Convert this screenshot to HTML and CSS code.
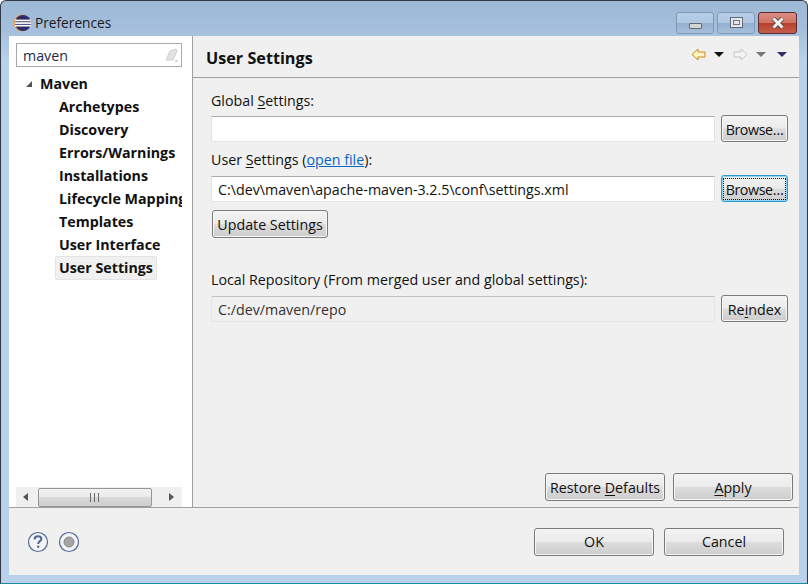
FILE: index.html
```html
<!DOCTYPE html>
<html lang="en">
<head>
    <meta charset="UTF-8">
    <meta name="viewport" content="width=device-width, initial-scale=1.0">
    <title>Preferences</title>
    <link rel="stylesheet" href="styles.css">
</head>
<body>

<div class="window">
    <div class="titlebar">
        <svg class="app-icon" width="18" height="18" viewBox="0 0 18 18">
            <circle cx="9" cy="9" r="8.5" fill="#e8a050"/>
            <circle cx="10" cy="9" r="8" fill="#2c2a6a"/>
            <rect x="2" y="5.6" width="16" height="1.7" fill="#fff"/>
            <rect x="2" y="8.2" width="16" height="1.7" fill="#fff"/>
            <rect x="2" y="10.8" width="16" height="1.7" fill="#fff"/>
        </svg>
        <span class="title">Preferences</span>
        <div class="win-buttons">
            <div class="win-btn">
                <span class="min-glyph"></span>
            </div>
            <div class="win-btn">
                <span class="max-glyph"></span>
            </div>
            <div class="win-btn close">
                <svg width="14" height="12" viewBox="0 0 14 12">
                    <path d="M2.5 1.5 L11.5 10.5 M11.5 1.5 L2.5 10.5" stroke="#4a3a3a" stroke-width="4.4"/>
                    <path d="M2.5 1.5 L11.5 10.5 M11.5 1.5 L2.5 10.5" stroke="#f4f4f4" stroke-width="3"/>
                </svg>
            </div>
        </div>
    </div>

    <div class="content">
        <div class="main">
            <div class="sidebar">
                <div class="filter">
                    <span>maven</span>
                    <svg width="14" height="14" viewBox="0 0 14 14">
                        <path d="M1 12 L5 3 L11 1 L12 3 L8 12 Z" fill="#e2e2e2" stroke="#cfcfcf"/>
                        <path d="M10 13 H13" stroke="#aaa"/>
                    </svg>
                </div>
                <div class="tree">
                    <div class="tree-root">
                        <span class="twisty"></span>
                        <span>Maven</span>
                    </div>
                    <div class="tree-item">Archetypes</div>
                    <div class="tree-item">Discovery</div>
                    <div class="tree-item">Errors/Warnings</div>
                    <div class="tree-item">Installations</div>
                    <div class="tree-item">Lifecycle Mappings</div>
                    <div class="tree-item">Templates</div>
                    <div class="tree-item">User Interface</div>
                    <div class="tree-item"><span class="selected">User Settings</span></div>
                </div>
                <div class="hscroll">
                    <span class="arrow-left"></span>
                    <div class="thumb">
                        <span class="grip"></span>
                    </div>
                    <span class="arrow-right"></span>
                </div>
            </div>

            <div class="page">
                <div class="page-header">
                    <h2>User Settings</h2>
                    <div class="nav-icons">
                        <svg width="15" height="13" viewBox="0 0 15 13">
                            <path d="M1 6.5 L7 1 V4 H14 V9 H7 V12 Z" fill="#fff3c4" stroke="#c98a1a"/>
                        </svg>
                        <span class="drop dark"></span>
                        <svg class="nav-forward" width="15" height="13" viewBox="0 0 15 13">
                            <path d="M14 6.5 L8 1 V4 H1 V9 H8 V12 Z" fill="#f6f6f6" stroke="#c4c4c4"/>
                        </svg>
                        <span class="drop gray"></span>
                        <span class="drop view-menu"></span>
                    </div>
                </div>

                <div class="form">
                    <div class="label"><span>Global <u>S</u>ettings:</span></div>
                    <div class="field-row">
                        <div class="field"></div>
                        <button class="btn browse">Browse…</button>
                    </div>

                    <div class="label label-user"><span>User <u>S</u>ettings (<a href="#">open file</a>):</span></div>
                    <div class="field-row">
                        <div class="field">C:\dev\maven\apache-maven-3.2.5\conf\settings.xml</div>
                        <button class="btn browse focused"><span class="focus-ring">Browse…</span></button>
                    </div>

                    <button class="btn update">Update Settings</button>

                    <div class="label label-repo"><span>Local Repository (From merged user and global settings):</span></div>
                    <div class="field-row">
                        <div class="field readonly">C:/dev/maven/repo</div>
                        <button class="btn browse reindex">Re<u>i</u>ndex</button>
                    </div>
                </div>

                <div class="page-actions">
                    <button class="btn action">Restore <u>D</u>efaults</button>
                    <button class="btn action"><u>A</u>pply</button>
                </div>
            </div>
        </div>

        <div class="footer">
            <svg class="help" width="22" height="22" viewBox="0 0 22 22">
                <circle cx="11" cy="11" r="9.5" fill="#f4f4f6" stroke="#4f6a94" stroke-width="1.2"/>
                <path d="M7.6 8.4 C7.6 6 9.4 5.2 11 5.2 C13 5.2 14.4 6.3 14.4 8 C14.4 10.2 11.2 10.2 11.2 13" fill="none" stroke="#4f6a94" stroke-width="2"/>
                <rect x="10.1" y="14.6" width="2.2" height="2.2" fill="#4f6a94"/>
            </svg>
            <svg class="record" width="22" height="22" viewBox="0 0 22 22">
                <circle cx="11" cy="11" r="9.5" fill="#f4f4f6" stroke="#4f6a94" stroke-width="1.2"/>
                <circle cx="11" cy="11" r="5" fill="#a4a4a4" stroke="#8a8a8a"/>
            </svg>
            <div class="footer-actions">
                <button class="btn action">OK</button>
                <button class="btn action">Cancel</button>
            </div>
        </div>
    </div>
</div>

</body>
</html>
```

FILE: styles.css
```css
* {
    box-sizing: border-box;
}
html, body {
    margin: 0;
    padding: 0;
}
body {
    width: 808px;
    height: 584px;
    overflow: hidden;
    font-family: "Open Sans", "Noto Sans", Arial, sans-serif;
    font-size: 14.25px;
    color: #111;
    background-color: #fff;
}
u {
    text-underline-offset: 2px;
}
.window {
    width: 808px;
    height: 584px;
    display: flex;
    flex-direction: column;
    padding: 0 8px 8px 8px;
    border: 1px solid #2f3a45;
    border-bottom-color: #1b8c9e;
    border-radius: 6px 6px 0 0;
    background: linear-gradient(to bottom, #9db9d6 0, #a5bfdc 30px, #b9d1ea 60px);
}

/* title bar */
.titlebar {
    height: 35px;
    flex-shrink: 0;
    display: flex;
    align-items: center;
    margin-left: 4px;
    padding-top: 8px;
}
.app-icon {
    margin-right: 4px;
}
.title {
    font-size: 13.7px;
    color: #1a1a1a;
}
.win-buttons {
    margin-left: auto;
    margin-right: 2px;
    display: flex;
    gap: 3px;
}
.win-btn {
    width: 38px;
    height: 22px;
    display: flex;
    align-items: center;
    justify-content: center;
    border: 1px solid #7f98b6;
    border-radius: 3px;
    background: linear-gradient(to bottom, #b6cde6 0, #b0c8e2 50%, #94b0cf 52%, #a6c0dc 100%);
}
.win-btn.close {
    width: 39px;
    border-color: #5a2a35;
    background: linear-gradient(to bottom, #d98d80 0, #cf7466 48%, #b8402c 52%, #c4604e 100%);
}
.min-glyph {
    width: 13px;
    height: 6px;
    margin-top: 6px;
    background-color: #d4d4d4;
    border: 1px solid #5e6a78;
    border-radius: 1px;
}
.max-glyph {
    width: 13px;
    height: 11px;
    background-color: #e8e8e8;
    border: 1px solid #5e6a78;
    box-shadow: inset 0 0 0 2px #e8e8e8, inset 0 0 0 3px #6a7686;
}

.content {
    flex: 1;
    display: flex;
    flex-direction: column;
    min-height: 0;
    background-color: #f0f0f0;
}
.main {
    flex: 1;
    display: flex;
    min-height: 0;
}

/* left tree */
.sidebar {
    width: 184px;
    flex-shrink: 0;
    display: flex;
    flex-direction: column;
    padding: 7px 10px 0 7px;
    background-color: #fff;
    border-right: 1px solid #a0a0a0;
}
.filter {
    height: 24px;
    flex-shrink: 0;
    display: flex;
    align-items: center;
    justify-content: space-between;
    padding: 0 2px 0 6px;
    border: 1px solid #a9a9a9;
    color: #1c2c4a;
}
.tree {
    flex: 1;
    margin-top: 5px;
    overflow: hidden;
    white-space: nowrap;
    font-weight: 700;
}
.tree-root {
    height: 23px;
    display: flex;
    align-items: center;
    padding-left: 10px;
}
.twisty {
    width: 0;
    height: 0;
    margin-right: 8px;
    border-left: 6px solid transparent;
    border-bottom: 6px solid #555;
}
.tree-item {
    height: 23px;
    line-height: 23px;
    padding-left: 43px;
}
.selected {
    display: inline-block;
    padding: 0 3px;
    margin-left: -4px;
    line-height: 22px;
    background-color: #f0f0f0;
    border: 1px solid #e4e4e4;
    border-radius: 2px;
}
.hscroll {
    height: 20px;
    flex-shrink: 0;
    display: flex;
    align-items: center;
    background-color: #f0f0f0;
}
.arrow-left, .arrow-right {
    width: 0;
    height: 0;
    border-top: 4px solid transparent;
    border-bottom: 4px solid transparent;
}
.arrow-left {
    margin-left: 7px;
    border-right: 5px solid #555;
}
.arrow-right {
    margin-left: auto;
    margin-right: 8px;
    border-left: 5px solid #555;
}
.thumb {
    width: 114px;
    height: 19px;
    margin-left: 10px;
    display: flex;
    align-items: center;
    justify-content: center;
    border: 1px solid #959595;
    border-radius: 2px;
    background: linear-gradient(to bottom, #f2f2f2 0, #ebebeb 45%, #d8d8d8 50%, #cfcfcf 100%);
}
.grip {
    width: 10px;
    height: 9px;
    background: repeating-linear-gradient(to right, #6a6a6a 0, #6a6a6a 1px, transparent 1px, transparent 4px);
}

/* right page */
.page {
    flex: 1;
    display: flex;
    flex-direction: column;
    min-width: 0;
}
.page-header {
    height: 42px;
    flex-shrink: 0;
    display: flex;
    justify-content: space-between;
    padding: 10px 12px 0 13px;
    border-bottom: 1px solid #a0a0a0;
}
.page-header h2 {
    margin: 0;
    font-size: 16.2px;
    line-height: 24px;
    font-weight: 700;
}
.nav-icons {
    display: flex;
    align-items: center;
    height: 16px;
}
.drop {
    width: 0;
    height: 0;
    margin-left: 8px;
    border-left: 5px solid transparent;
    border-right: 5px solid transparent;
    border-top: 5px solid #111;
}
.drop.gray {
    border-top-color: #777;
}
.drop.view-menu {
    margin-left: 11px;
    border-top-color: #3a2a6a;
}
.nav-forward {
    margin-left: 9px;
}
.form {
    flex: 1;
    padding: 13px 11px 0 18px;
}
.label {
    height: 24px;
}
.label-user {
    margin-top: 8px;
    height: 25px;
}
.label-repo {
    margin-top: 32px;
    height: 25px;
}
a {
    color: #0a64c4;
}
.field-row {
    display: flex;
    gap: 6px;
    height: 27px;
}
.field {
    flex: 1;
    height: 26px;
    margin-top: 1px;
    line-height: 25px;
    padding: 0 6px;
    background-color: #fff;
    border: 1px solid #e4e4e4;
    border-top-color: #ababab;
    color: #111;
    border-radius: 1px;
}
.field.readonly {
    background-color: #f0f0f0;
    color: #333;
    border-color: #e4e4e4;
    border-top-color: #c0c0c0;
}
.btn {
    font-family: inherit;
    font-size: 14.25px;
    color: #111;
    padding: 0;
    border: 1px solid #7a7a7a;
    border-radius: 3px;
    background: linear-gradient(to bottom, #f3f3f3 0, #ebebeb 48%, #dcdcdc 52%, #cdcdcd 100%);
    box-shadow: inset 0 0 0 1px #f6f6f6;
}
.browse {
    width: 67px;
    height: 27px;
    padding-top: 2px;
    letter-spacing: -0.4px;
}
.reindex {
    letter-spacing: 0;
}
.focused {
    padding-top: 0;
    border-color: #2a9ad0;
    box-shadow: inset 0 0 0 1px #8fd4f2;
}
.focus-ring {
    display: block;
    margin: 2px;
    padding-top: 1px;
    line-height: 19px;
    outline: 1px dotted #111;
}
.update {
    display: block;
    width: 116px;
    height: 28px;
    margin: 8px 0 0 1px;
}
.page-actions {
    display: flex;
    justify-content: flex-end;
    gap: 8px;
    padding: 0 6px 6px 0;
}
.action {
    width: 120px;
    height: 28px;
}

/* footer */
.footer {
    height: 68px;
    flex-shrink: 0;
    display: flex;
    align-items: center;
    padding: 0 15px 0 18px;
    border-top: 1px solid #a0a0a0;
    background-color: #f0f0f0;
}
.record {
    margin-left: 9px;
}
.footer-actions {
    margin-left: auto;
    display: flex;
    gap: 10px;
}
```
